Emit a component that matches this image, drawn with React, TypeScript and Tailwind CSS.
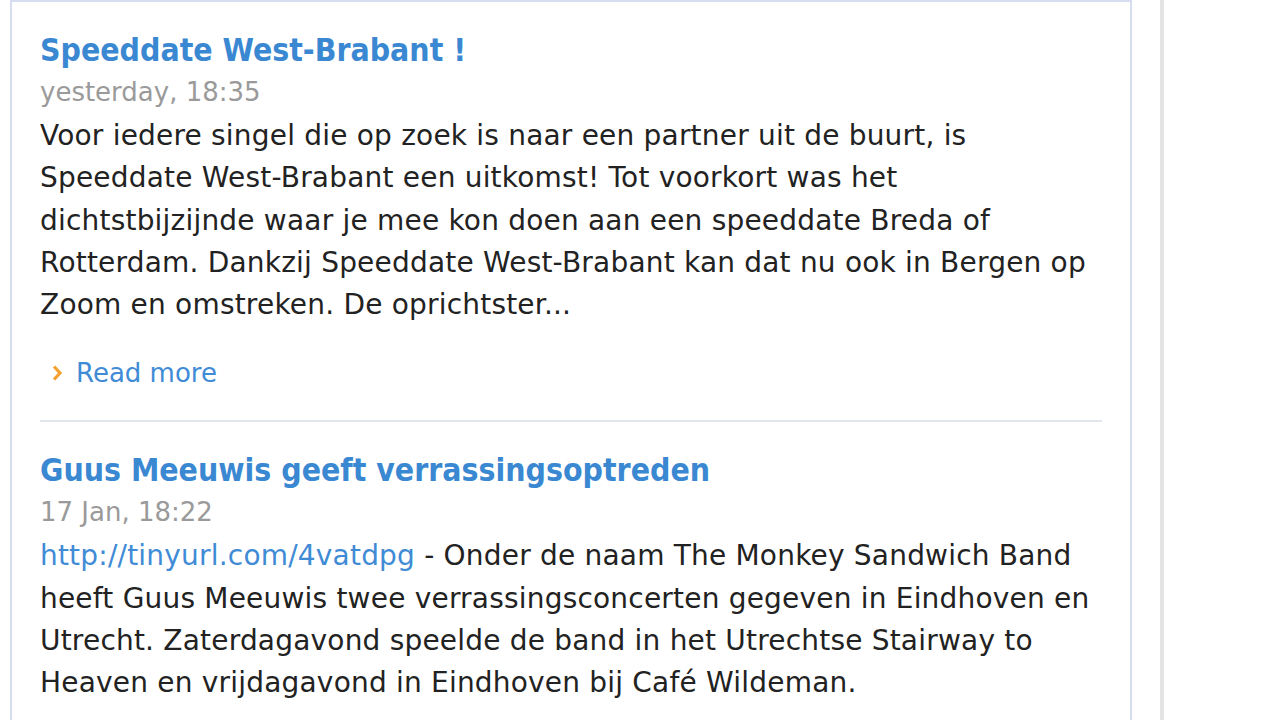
import React from "react";

type Post = {
  title: string;
  date: string;
  link?: string;
  body: string;
  more?: boolean;
};

const posts: Post[] = [
  {
    title: "Speeddate West-Brabant !",
    date: "yesterday, 18:35",
    body:
      "Voor iedere singel die op zoek is naar een partner uit de buurt, is Speeddate West-Brabant een uitkomst! Tot voorkort was het dichtstbijzijnde waar je mee kon doen aan een speeddate Breda of Rotterdam. Dankzij Speeddate West-Brabant kan dat nu ook in Bergen op Zoom en omstreken. De oprichtster...",
    more: true,
  },
  {
    title: "Guus Meeuwis geeft verrassingsoptreden",
    date: "17 Jan, 18:22",
    link: "http://tinyurl.com/4vatdpg",
    body:
      "- Onder de naam The Monkey Sandwich Band heeft Guus Meeuwis twee verrassingsconcerten gegeven in Eindhoven en Utrecht. Zaterdagavond speelde de band in het Utrechtse Stairway to Heaven en vrijdagavond in Eindhoven bij Café Wildeman.",
  },
];

export default function App() {
  return (
    <div className="min-h-screen bg-white font-['DejaVu_Sans',Verdana,sans-serif]">
      <div className="w-[1164px] min-h-screen pl-[10px] pr-[28px] border-r-4 border-[#e4e4e4]">
        <div className="border-2 border-b-0 border-[#d6ddf0] min-h-screen pl-[28px] pr-[28px] pt-[28px]">
          {posts.map((p, i) => (
            <div key={i}>
              {i > 0 && <div className="h-[2px] bg-[#e1e6ec] mt-[26px] mb-[28px]" />}
              <h2 className="font-['DejaVu_Sans_Condensed','DejaVu_Sans',sans-serif] font-bold text-[31.7px] leading-[40px] text-[#3a88d2]">
                {p.title}
              </h2>
              <div className="mt-[1px] text-[26px] leading-[42px] text-[#9a9a9a]">{p.date}</div>
              <p className="mt-[2px] text-[28px] tracking-[0.2px] leading-[42.25px] text-[#222]">
                {p.link && <a className="text-[#3f8bd6]">{p.link}</a>}
                {p.link ? " " : ""}
                {p.body}
              </p>
              {p.more && (
                <div className="mt-[26px] flex items-center gap-[13px] pl-[12px] text-[26px] leading-[42px] text-[#3f8bd6]">
                  <svg width="11" height="18" viewBox="0 0 11 18">
                    <path d="M2 2.5 L8 9 L2 15.5" fill="none" stroke="#f5a030" strokeWidth="3.2" />
                  </svg>
                  <span>Read more</span>
                </div>
              )}
            </div>
          ))}
        </div>
      </div>
    </div>
  );
}
